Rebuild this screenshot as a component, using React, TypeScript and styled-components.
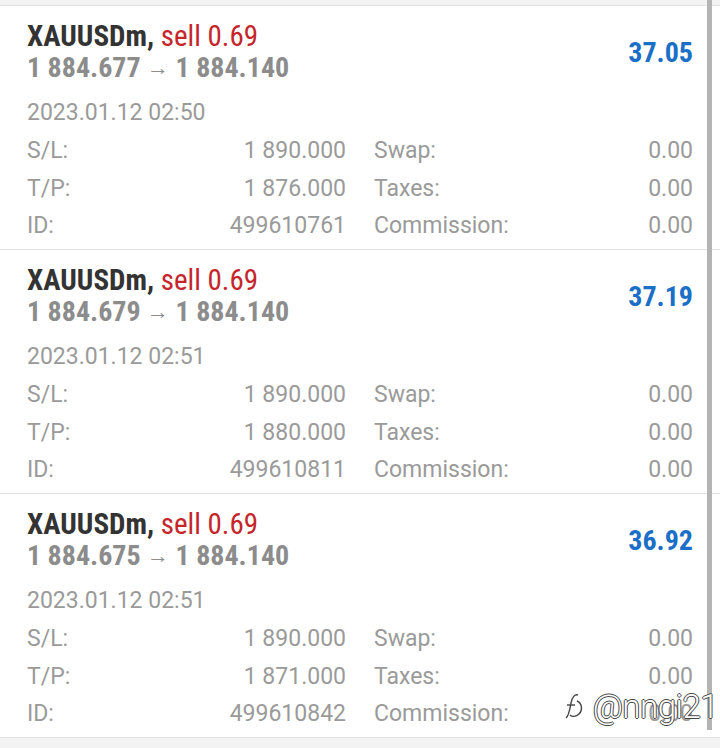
import React from "react";
import styled, { createGlobalStyle } from "styled-components";

type Trade = {
    symbol: string;
    side: string;
    volume: string;
    open: string;
    close: string;
    profit: string;
    time: string;
    sl: string;
    tp: string;
    id: string;
};

const trades: Trade[] = [
    { symbol: "XAUUSDm", side: "sell", volume: "0.69", open: "1 884.677", close: "1 884.140", profit: "37.05", time: "2023.01.12 02:50", sl: "1 890.000", tp: "1 876.000", id: "499610761" },
    { symbol: "XAUUSDm", side: "sell", volume: "0.69", open: "1 884.679", close: "1 884.140", profit: "37.19", time: "2023.01.12 02:51", sl: "1 890.000", tp: "1 880.000", id: "499610811" },
    { symbol: "XAUUSDm", side: "sell", volume: "0.69", open: "1 884.675", close: "1 884.140", profit: "36.92", time: "2023.01.12 02:51", sl: "1 890.000", tp: "1 871.000", id: "499610842" },
];

const GlobalStyle = createGlobalStyle`
  html, body {
    margin: 0;
    padding: 0;
    background: #f3f3f3;
  }
  body {
    font-family: Roboto, "Noto Sans", sans-serif;
  }
`

const Screen = styled.div`
  position: relative;
  width: 720px;
  height: 748px;
  overflow: hidden;
  background: #f3f3f3;
`

const List = styled.div`
  margin-top: 5px;
  border-top: 1px solid #e2e2e2;
  background: #fff;
`

const Card = styled.div`
  box-sizing: border-box;
  height: 244px;
  padding: 14px 27px 0 27px;
  border-bottom: 1px solid #e2e2e2;
`

const Header = styled.div`
  display: flex;
  align-items: center;
  justify-content: space-between;
`

const HeaderText = styled.div`
  display: flex;
  flex-direction: column;
`

const Title = styled.div`
  height: 32px;
  line-height: 32px;
  font-size: 29px;
  font-weight: 700;
  font-stretch: 75%;
  color: #333;

  .side {
    font-weight: 400;
    color: #c4262c;
  }
`

const Prices = styled.div`
  height: 32px;
  line-height: 32px;
  font-size: 28px;
  font-weight: 700;
  font-stretch: 79%;
  color: #8c8c8c;

  .arrow {
    font-weight: 400;
    font-size: 22px;
    position: relative;
    top: -2px;
  }
`

const Profit = styled.div`
  font-size: 28px;
  font-weight: 700;
  font-stretch: 80%;
  color: #1b6fc6;
`

const Time = styled.div`
  margin-top: 10px;
  height: 38px;
  line-height: 38px;
  font-size: 23px;
  color: #9a9a9a;
`

const Details = styled.div`
  display: grid;
  grid-template-columns: 1fr 1fr;
  column-gap: 28px;
`

const Field = styled.div`
  display: flex;
  justify-content: space-between;
  height: 37.5px;
  line-height: 37.5px;
  font-size: 23px;
  color: #9a9a9a;
`

const Scrollbar = styled.div`
  position: absolute;
  top: 0;
  right: 8px;
  width: 5px;
  height: 730px;
  background: #b4b4b4;
`

const Watermark = styled.div`
  position: absolute;
  right: 2px;
  bottom: 22px;
  display: flex;
  align-items: center;
  gap: 8px;
  font-family: Roboto, sans-serif;
  font-weight: 300;
  font-size: 33px;
  letter-spacing: -0.5px;
  color: #fff;
  text-shadow: -1px 0 #444, 1px 0 #444, 0 -1px #444, 0 1px #444;
`

const FieldRow = ({ label, value }: { label: string; value: string }) => (
    <Field>
        <span>{label}</span>
        <span>{value}</span>
    </Field>
)

const TradeCard = ({ t }: { t: Trade }) => (
    <Card>
        <Header>
            <HeaderText>
                <Title>
                    {t.symbol}, <span className="side">{t.side} {t.volume}</span>
                </Title>
                <Prices>
                    {t.open} <span className="arrow">→</span> {t.close}
                </Prices>
            </HeaderText>
            <Profit>{t.profit}</Profit>
        </Header>
        <Time>{t.time}</Time>
        <Details>
            <FieldRow label="S/L:" value={t.sl} />
            <FieldRow label="Swap:" value="0.00" />
            <FieldRow label="T/P:" value={t.tp} />
            <FieldRow label="Taxes:" value="0.00" />
            <FieldRow label="ID:" value={t.id} />
            <FieldRow label="Commission:" value="0.00" />
        </Details>
    </Card>
)

export default function App() {
    return (
        <Screen>
            <GlobalStyle />
            <List>
                {trades.map((t) => (
                    <TradeCard key={t.id} t={t} />
                ))}
            </List>
            <Scrollbar />
            <Watermark>
                <svg width="22" height="30" viewBox="0 0 22 30" fill="none" stroke="#444" strokeWidth="1.4">
                    <path d="M3 26 C6 24 7 16 8 11 C9 5 12 2 15 3" />
                    <path d="M4 13 L12 13" />
                    <path d="M14 9 C19 11 20 18 16 22 C13 25 9 25 7 23" />
                </svg>
                <span>@nngi21</span>
            </Watermark>
        </Screen>
    )
}
